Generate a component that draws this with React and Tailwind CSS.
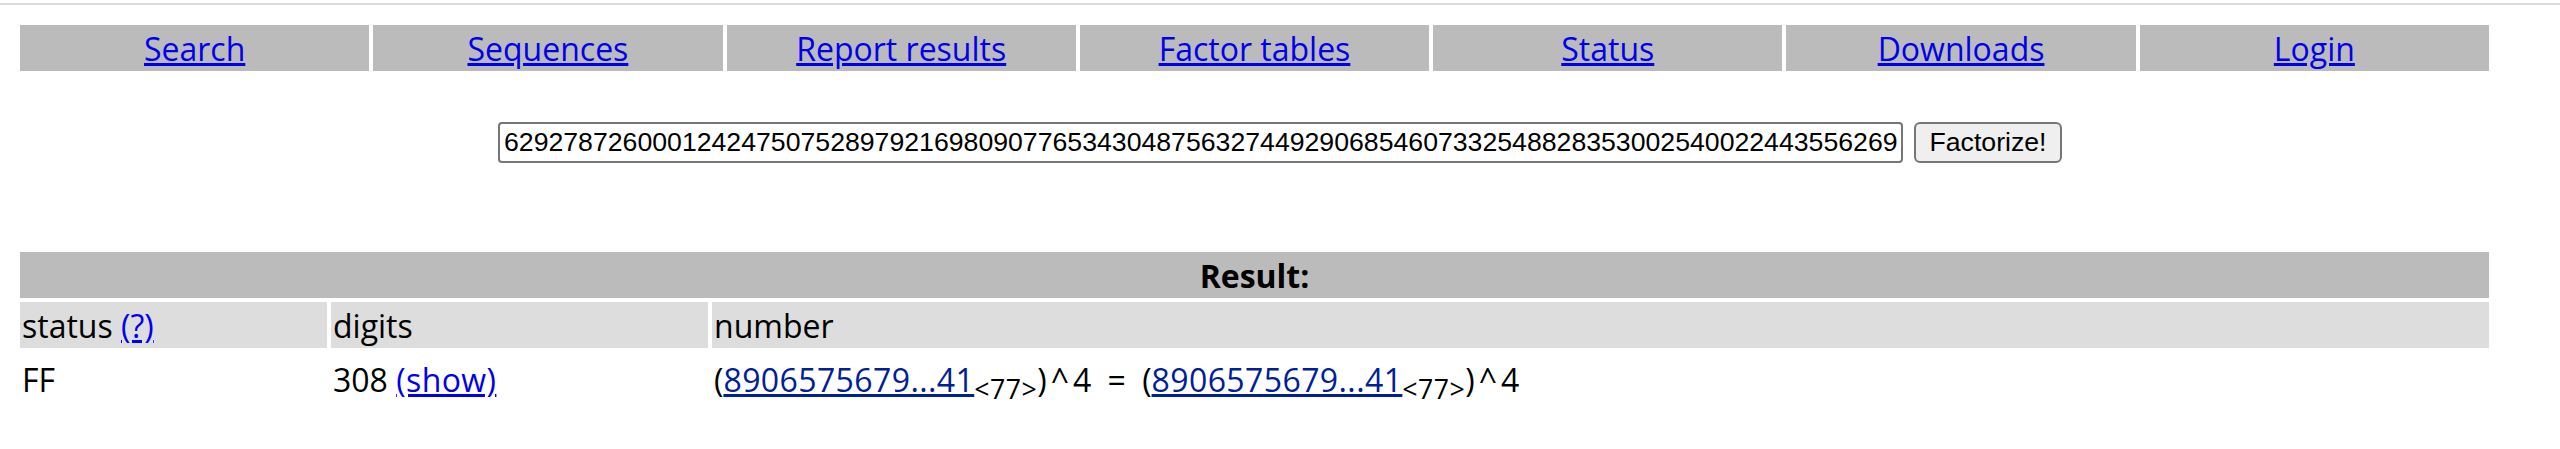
import React from "react";

const navItems = ["Search", "Sequences", "Report results", "Factor tables", "Status", "Downloads", "Login"];

// 308 digit input value, only the first ~94 show
const numberValue =
  "62927872600012424750752897921698090776534304875632744929068546073325488283530025400224435562690" +
  "41837265019283746501928374650192837465019283746501928374650192837465019283746501928374650192837" +
  "46501928374650192837465019283746501928374650192837465019283746501928374650192837465019283746501" +
  "9283746501928374650192837461";

const NumLink = ({ tail }) => (
  <>
    (<a href="#" className="text-[#002099] underline tracking-[0.4px]">8906575679...41</a>
    <sub className="text-[26.67px] tracking-[0.5px]">&lt;77&gt;</sub>
    <span className="tracking-[4px]">{tail}</span>
  </>
);

const App = () => {
  return (
    <div className="min-h-screen bg-white text-black font-['Open_Sans',sans-serif] text-[32px] leading-[42px]">
      <div className="h-[2px] mt-[3px] bg-[#dddddd]" />

      {/* top menu */}
      <div className="pl-[20px] pt-[20px]">
        <div className="grid w-[2469px] grid-cols-7 gap-[4px]">
          {navItems.map((item) => (
            <div key={item} className="bg-[#bbbbbb] pt-[3px] pb-[1px] px-[2px] text-center">
              <a href="#" className="text-[#0000ee] underline">{item}</a>
            </div>
          ))}
        </div>
      </div>

      {/* query form */}
      <form className="mt-[51px] flex items-center justify-center gap-[11px]" onSubmit={(e) => e.preventDefault()}>
        <input
          type="text"
          defaultValue={numberValue}
          className="h-[41px] w-[1405px] rounded-[4px] border-2 border-[#767676] bg-white px-[4px] font-['Liberation_Sans',Arial,sans-serif] text-[26.67px] leading-[37px] text-black outline-none"
        />
        <button
          type="submit"
          className="h-[41px] w-[148px] rounded-[6px] border-2 border-[#767676] bg-[#efefef] font-['Liberation_Sans',Arial,sans-serif] text-[26.67px] leading-[37px] text-black"
        >
          Factorize!
        </button>
      </form>

      {/* result table */}
      <div className="pl-[20px] mt-[89px]">
        <div className="grid w-[2469px] grid-cols-[307px_377px_1fr] gap-[4px]">
          <div className="col-span-3 bg-[#bbbbbb] pt-[3px] pb-[1px] px-[2px] text-center font-bold">Result:</div>

          <div className="bg-[#dddddd] pt-[3px] pb-[1px] px-[2px]">
            status <a href="#" className="text-[#0000ee] underline">(?)</a>
          </div>
          <div className="bg-[#dddddd] pt-[3px] pb-[1px] px-[2px]">digits</div>
          <div className="bg-[#dddddd] pt-[3px] pb-[1px] px-[2px]">number</div>

          <div className="pt-[7px] pb-[2px] px-[2px]">FF</div>
          <div className="pt-[7px] pb-[2px] px-[2px]">
            308 <a href="#" className="text-[#0000ee] underline tracking-[0.4px]">(show)</a>
          </div>
          <div className="pt-[7px] pb-[2px] px-[2px] whitespace-nowrap">
            <NumLink tail={")^4 = "} />
            <NumLink tail={")^4"} />
          </div>
        </div>
      </div>
    </div>
  );
};

export default App;
